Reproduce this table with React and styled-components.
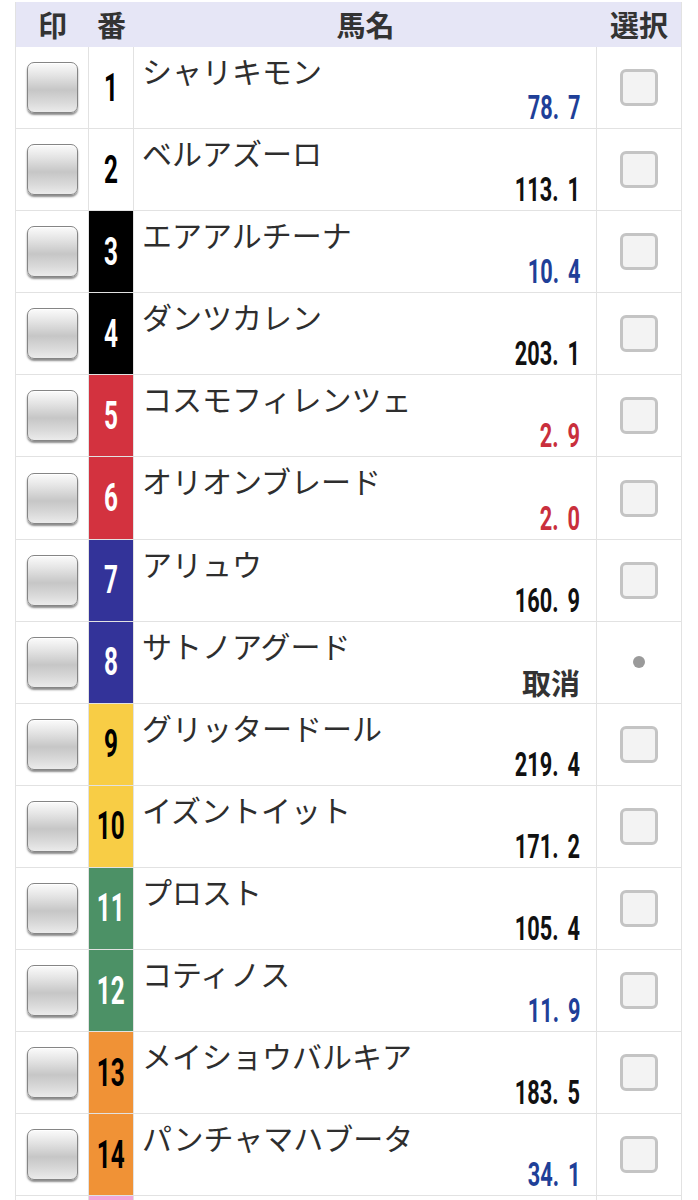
import React from 'react';
import styled, { createGlobalStyle } from 'styled-components';

const GlobalStyle = createGlobalStyle`
	html, body {
		margin : 0;
		padding : 0;
		background : #ffffff;
	}
	body {
		font-family : "Noto Sans CJK JP", "Noto Sans", sans-serif;
	}
`;

const Page = styled.div`
	padding : 2px 16px 0 15px;
	height : 1198px;
	overflow : hidden;
`;

const Row = styled.div`
	display : grid;
	grid-template-columns : 73px 45px 1fr 84px;
	height : ${props => props.head ? '45px' : '82.1px'};
	background : ${props => props.head ? '#e6e6f6' : '#ffffff'};
	border-bottom : ${props => props.head ? 'none' : '1px solid #e2e2e2'};
	border-left : 1px solid #e2e2e2;
	border-right : 1px solid #e2e2e2;
	box-sizing : border-box;
`;

const HeadCell = styled.div`
	display : flex;
	align-items : center;
	justify-content : center;
	font-size : 29px;
	font-weight : 700;
	color : #333333;
	line-height : 1;
`;

const Cell = styled.div`
	display : flex;
	align-items : center;
	justify-content : center;
	border-right : ${props => props.last ? 'none' : '1px solid #e2e2e2'};
	box-sizing : border-box;
	min-width : 0;
`;

const MarkButton = styled.div`
	width : 51px;
	height : 51px;
	box-sizing : border-box;
	border : 1px solid #858585;
	border-radius : 7px;
	background : linear-gradient(#fbfbfb 0%, #e4e4e4 25%, #c6c6c6 55%, #d9d9d9 80%, #ebebeb 100%);
	box-shadow : 0 2px 2px rgba(0, 0, 0, 0.45), inset 0 1px 0 #ffffff;
`;

const NumberCell = styled.div`
	display : flex;
	align-items : center;
	justify-content : center;
	background : ${props => props.bg};
	color : ${props => props.fg};
	border-right : 1px solid #e2e2e2;
	box-sizing : border-box;
`;

const Num = styled.span`
	display : inline-block;
	font-family : Roboto, "Liberation Sans", sans-serif;
	font-weight : 700;
	font-size : 38px;
	line-height : 1;
	transform : scaleX(0.64);
`;

const NameCell = styled.div`
	display : flex;
	flex-direction : column;
	justify-content : space-between;
	border-right : 1px solid #e2e2e2;
	box-sizing : border-box;
	padding : 5px 16px 4px 8px;
	min-width : 0;
`;

const HorseName = styled.div`
	font-size : 30px;
	line-height : 36px;
	color : #2e2e2e;
	white-space : nowrap;
`;

const Odds = styled.div`
	align-self : flex-end;
	font-family : Roboto, "Liberation Sans", sans-serif;
	font-weight : 700;
	font-size : 34px;
	line-height : 34px;
	color : ${props => props.tone};
	transform : scaleX(0.64);
	transform-origin : right center;
	white-space : nowrap;
`;

const Dot = styled.span`
	margin-right : 14px;
`;

const Cancel = styled.div`
	align-self : flex-end;
	font-size : 29px;
	font-weight : 700;
	line-height : 34px;
	color : #333333;
`;

const CheckBox = styled.div`
	width : 38px;
	height : 37px;
	box-sizing : border-box;
	border : 3px solid #c4c4c4;
	border-radius : 6px;
	background : #f3f3f3;
`;

const Disabled = styled.div`
	width : 12px;
	height : 12px;
	border-radius : 50%;
	background : #9a9a9a;
`;

const frames = {
	1: ['#ffffff', '#000000'],
	2: ['#000000', '#ffffff'],
	3: ['#d3323f', '#ffffff'],
	4: ['#333399', '#ffffff'],
	5: ['#f8cd45', '#000000'],
	6: ['#4c9166', '#ffffff'],
	7: ['#f09236', '#000000'],
	8: ['#f2a7d8', '#000000'],
};

const horses = [
	{ no: 1, waku: 1, name: 'シャリキモン', odds: '78.7', tone: 'blue' },
	{ no: 2, waku: 1, name: 'ベルアズーロ', odds: '113.1' },
	{ no: 3, waku: 2, name: 'エアアルチーナ', odds: '10.4', tone: 'blue' },
	{ no: 4, waku: 2, name: 'ダンツカレン', odds: '203.1' },
	{ no: 5, waku: 3, name: 'コスモフィレンツェ', odds: '2.9', tone: 'red' },
	{ no: 6, waku: 3, name: 'オリオンブレード', odds: '2.0', tone: 'red' },
	{ no: 7, waku: 4, name: 'アリュウ', odds: '160.9' },
	{ no: 8, waku: 4, name: 'サトノアグード', scratched: true },
	{ no: 9, waku: 5, name: 'グリッタードール', odds: '219.4' },
	{ no: 10, waku: 5, name: 'イズントイット', odds: '171.2' },
	{ no: 11, waku: 6, name: 'プロスト', odds: '105.4' },
	{ no: 12, waku: 6, name: 'コティノス', odds: '11.9', tone: 'blue' },
	{ no: 13, waku: 7, name: 'メイショウバルキア', odds: '183.5' },
	{ no: 14, waku: 7, name: 'パンチャマハブータ', odds: '34.1', tone: 'blue' },
	{ no: 15, waku: 8, name: '', odds: '', hidden: true },
];

const tones = {
	blue: '#1f3f98',
	red: '#c92f3c',
	black: '#111111',
};

function OddsText({ value, tone }) {
	const [whole, dec] = value.split('.');
	return (
		<Odds tone={tones[tone || 'black']}>
			{whole}
			{dec !== undefined && <Dot>.</Dot>}
			{dec}
		</Odds>
	);
}

function HorseRow({ horse }) {
	const [bg, fg] = frames[horse.waku];
	return (
		<Row>
			<Cell>
				{!horse.hidden && <MarkButton />}
			</Cell>
			<NumberCell bg={bg} fg={fg}>
				{!horse.hidden && <Num>{horse.no}</Num>}
			</NumberCell>
			<NameCell>
				<HorseName>{horse.name}</HorseName>
				{horse.scratched
					? <Cancel>取消</Cancel>
					: <OddsText value={horse.odds} tone={horse.tone} />}
			</NameCell>
			<Cell last>
				{horse.scratched ? <Disabled /> : !horse.hidden && <CheckBox />}
			</Cell>
		</Row>
	);
}

export default function App() {
	return (
		<>
			<GlobalStyle />
			<Page>
				<Row head>
					<HeadCell>印</HeadCell>
					<HeadCell>番</HeadCell>
					<HeadCell>馬名</HeadCell>
					<HeadCell>選択</HeadCell>
				</Row>
				{horses.map(horse => <HorseRow key={horse.no} horse={horse} />)}
			</Page>
		</>
	);
}
